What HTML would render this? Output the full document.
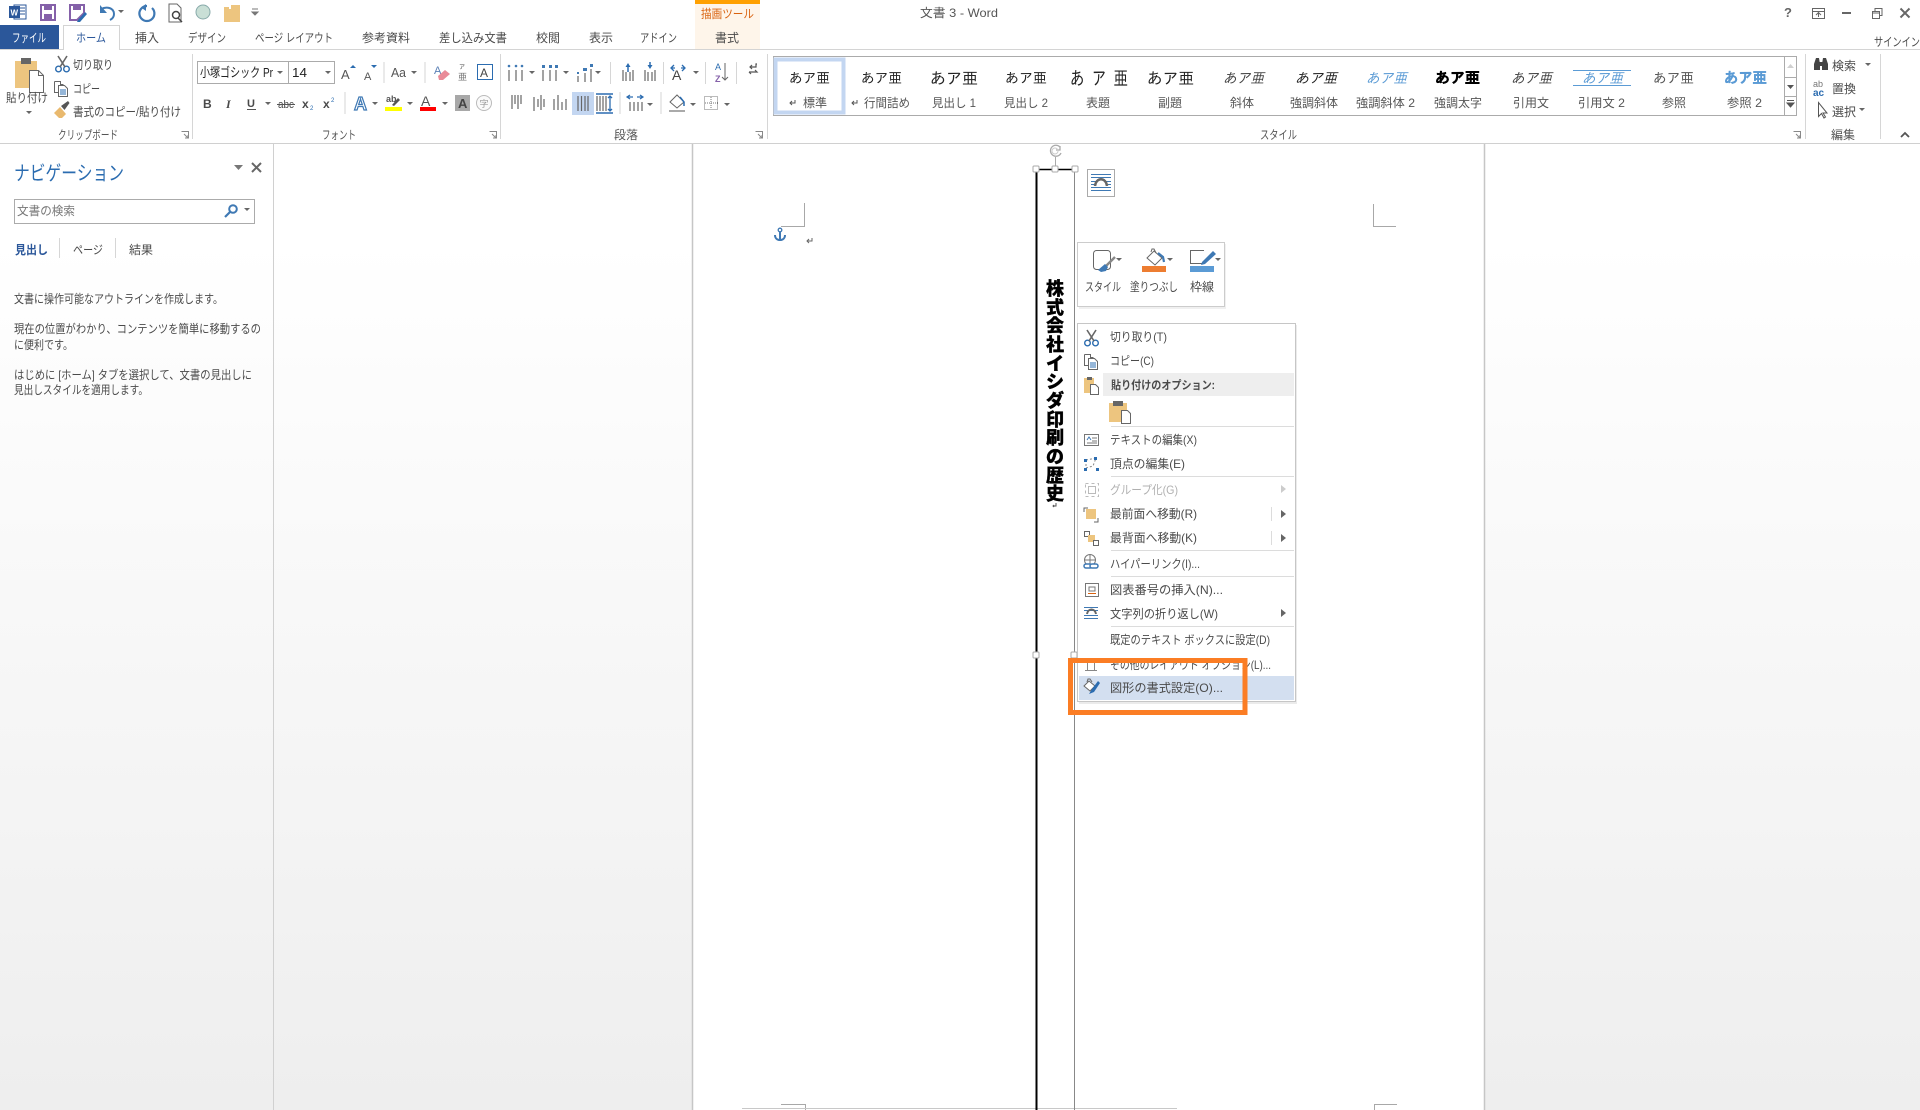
<!DOCTYPE html>
<html lang="ja"><head><meta charset="utf-8"><title>文書 3 - Word</title>
<style>
html,body{margin:0;padding:0;background:#fff;overflow:hidden}
svg{display:block}
text{font-family:"Liberation Sans","Noto Sans CJK JP",sans-serif;font-size:12px;fill:#4a4a4a}
.s{font-family:"IPAGothic","Noto Sans CJK JP",sans-serif;fill:#222}
.m{fill:#555}
.g{fill:#b0b0b0}
.l{stroke:#666;stroke-width:1.2;fill:none}
.sep{stroke:#d6d6d6;stroke-width:1;fill:none}
.b{fill:none;stroke:#2b6cb0;stroke-width:1.5}
.dr{fill:#666}
</style></head><body>
<svg xmlns="http://www.w3.org/2000/svg" width="1920" height="1110" viewBox="0 0 1920 1110">
<defs>
<linearGradient id="bg" x1="0" y1="144" x2="0" y2="1110" gradientUnits="userSpaceOnUse"><stop offset="0" stop-color="#fff"/><stop offset="0.1" stop-color="#fff"/><stop offset="1" stop-color="#eeeeee"/></linearGradient>
<g id="dd"><path class="dr" d="M0 0h6l-3 3z"/></g>
<g id="scis"><circle cx="3.5" cy="13" r="2.8" fill="none" stroke="#2b6cb0" stroke-width="1.4"/><circle cx="11.5" cy="13" r="2.8" fill="none" stroke="#2b6cb0" stroke-width="1.4"/><path d="M5 11L12 0M10 11L3 0" stroke="#666" stroke-width="1.6" fill="none"/></g>
<g id="copy"><path d="M.5.5h6v3h3M.5.5v11h4" fill="none" stroke="#666"/><path d="M4.5 4.5h6l3 3v8h-9z" fill="#fff" stroke="#666"/><path d="M6 9h6M6 11h6M6 13h6" stroke="#2b6cb0"/></g>
</defs>

<rect width="1920" height="1110" fill="#fff"/>
<!-- tool tab -->
<rect x="695" y="0" width="65" height="49" fill="#fef5ea"/>
<rect x="695" y="0" width="65" height="4" fill="#ffa000"/>

<!-- QAT -->
<g>
<rect x="14" y="5" width="12" height="14" fill="#fff" stroke="#2b579a"/><path d="M18 8h7M18 11h7M18 14h7" stroke="#2b579a"/><rect x="9" y="6" width="11" height="12" fill="#2b579a"/><text x="10.5" y="15.5" style="font-size:8px;fill:#fff;font-weight:700">W</text>
<path d="M41 5h14v15H41z" fill="#fff" stroke="#8561a9" stroke-width="2"/><rect x="44" y="5" width="8" height="5" fill="#8561a9"/><rect x="44" y="14" width="8" height="6" fill="#8561a9"/>
<path d="M70 5h14v8l-7 7h-7z" fill="#fff" stroke="#8561a9" stroke-width="2"/><rect x="73" y="5" width="8" height="5" fill="#8561a9"/><path d="M78 20l7-8 2 2-7 8-3 0z" fill="#2b6cb0"/>
<path d="M101 9c6-3 13-1 13 5 0 3-2 5-4 6" fill="none" stroke="#3f79b4" stroke-width="2"/><path d="M100 5v8h7z" fill="#3f79b4"/>
<use href="#dd" x="118" y="10"/>
<path d="M147 6a7.500 7.500 0 1 0 5 2" fill="none" stroke="#3f79b4" stroke-width="2.200"/><path d="M146 4v7l-5-3.500z" fill="#3f79b4"/>
<path d="M169 4h8l4 4v14h-12z" fill="#fff" stroke="#666"/><circle cx="176" cy="15" r="3.500" fill="none" stroke="#444" stroke-width="1.500"/><path d="M178 18l4 4" stroke="#444" stroke-width="1.500"/>
<circle cx="203" cy="12" r="7" fill="#c9dfd6" stroke="#8aa"/>
<rect x="224" y="9" width="16" height="13" fill="#edc57f"/><path d="M224 7h5v3h-5zM231 5h9v5h-9z" fill="#edc57f"/>
<path d="M252 9h6M252 12h6l-3 3z" stroke="#777" fill="#777"/>
</g>

<!-- Tabs -->
<rect x="0" y="25" width="59" height="25" fill="#2b579a"/>
<text x="12" y="42" textLength="34" lengthAdjust="spacingAndGlyphs" style="fill:#fff">ファイル</text>
<path d="M0 49.500H63.500V25.500H119.500V49.500H1920" fill="none" stroke="#d4d4d4"/>
<rect x="64" y="26" width="55" height="25" fill="#fff"/>
<text x="76" y="42" textLength="30" lengthAdjust="spacingAndGlyphs" style="fill:#2b579a">ホーム</text>
<text x="135" y="42" textLength="24" lengthAdjust="spacingAndGlyphs">挿入</text>
<text x="188" y="42" textLength="38" lengthAdjust="spacingAndGlyphs">デザイン</text>
<text x="255" y="42" textLength="78" lengthAdjust="spacingAndGlyphs">ページ レイアウト</text>
<text x="362" y="42" textLength="48" lengthAdjust="spacingAndGlyphs">参考資料</text>
<text x="439" y="42" textLength="68" lengthAdjust="spacingAndGlyphs">差し込み文書</text>
<text x="536" y="42" textLength="24" lengthAdjust="spacingAndGlyphs">校閲</text>
<text x="589" y="42" textLength="24" lengthAdjust="spacingAndGlyphs">表示</text>
<text x="640" y="42" textLength="37" lengthAdjust="spacingAndGlyphs">アドイン</text>
<text x="715" y="42" textLength="24" lengthAdjust="spacingAndGlyphs">書式</text>
<text x="701" y="18" textLength="53" lengthAdjust="spacingAndGlyphs" style="fill:#d9620f">描画ツール</text>
<text x="920" y="17" textLength="78" lengthAdjust="spacingAndGlyphs" style="fill:#555">文書 3 - Word</text>

<!-- Window controls -->
<text x="1784" y="17" style="font-size:13px;font-weight:700;fill:#666">?</text>
<path d="M1812.500 8.500h12v10h-12zM1812.500 11.500h12M1818.500 17v-4M1816 15l2.500-2.500 2.500 2.500" fill="none" stroke="#666"/>
<rect x="1842" y="12" width="9" height="2" fill="#666"/>
<path d="M1872.500 11.500h7v7h-7zM1872.500 13h7M1875 11V8.500h7v7h-2" fill="none" stroke="#666"/>
<path d="M1900.500 8.500l9 9M1909.500 8.500l-9 9" stroke="#666" stroke-width="2"/>
<text x="1874" y="46" textLength="46" lengthAdjust="spacingAndGlyphs">サインイン</text>

<!-- Ribbon separators -->
<path class="sep" d="M192.500 54v85M500.500 54v85M767.500 54v85M1805.500 54v85M1880.500 54v85"/>
<path d="M0 143.500H1920" stroke="#d0d0d0"/>

<!-- Clipboard -->
<g transform="translate(15,57)"><rect x="0" y="4" width="22" height="27" fill="#edc57f"/><rect x="6" y="1" width="10" height="6" fill="#666"/><path d="M14.500 13.500h9l5 5v17h-14z" fill="#fff" stroke="#666"/><path d="M23.500 13.500v5h5" fill="none" stroke="#666"/></g>
<text x="6" y="102" textLength="42" lengthAdjust="spacingAndGlyphs">貼り付け</text>
<use href="#dd" x="26" y="111"/>
<use href="#scis" x="55" y="56"/>
<text x="73" y="69" textLength="40" lengthAdjust="spacingAndGlyphs">切り取り</text>
<use href="#copy" x="54" y="81"/>
<text x="73" y="93" textLength="27" lengthAdjust="spacingAndGlyphs">コピー</text>
<path d="M54 113l6-6 6 7-4 4h-3z" fill="#e9b96e"/><path d="M61 106l7-5 1.500 2-5 7z" fill="#555"/>
<text x="73" y="116" textLength="108" lengthAdjust="spacingAndGlyphs">書式のコピー/貼り付け</text>
<text x="58" y="139" textLength="60" lengthAdjust="spacingAndGlyphs" class="m">クリップボード</text>
<path d="M181.500 131.500h7v7M184 134l4 4M188 135v3h-3" fill="none" stroke="#888"/>

<!-- Font -->
<rect x="197.500" y="61.500" width="137" height="22" fill="#fff" stroke="#ababab"/>
<path d="M288.500 61v23" stroke="#ababab"/>
<text x="200" y="77" textLength="73" lengthAdjust="spacingAndGlyphs" style="font-size:13px;fill:#222">小塚ゴシック Pr</text>
<use href="#dd" x="277" y="71"/>
<text x="292" y="77" textLength="15" lengthAdjust="spacingAndGlyphs" style="font-size:13px;fill:#222">14</text>
<use href="#dd" x="325" y="71"/>
<text x="341" y="79" style="font-size:13px;fill:#555">A</text><path d="M350 68h6l-3-3z" fill="#2b6cb0"/>
<text x="364" y="80" style="font-size:11px;fill:#555">A</text><path d="M371 65h6l-3 3z" fill="#2b6cb0"/>
<path class="sep" d="M384 62v21M425 62v21"/>
<text x="391" y="77" textLength="15" lengthAdjust="spacingAndGlyphs" style="font-size:13px;fill:#555">Aa</text>
<use href="#dd" x="411" y="71"/>
<text x="434" y="74" style="font-size:11px;fill:#5a7fb5">A</text><path d="M438 76l7-6 5 4-7 6h-4z" fill="#e98b98"/>
<text x="459" y="69" style="font-size:6px">ア</text><text x="458" y="80" style="font-size:9px;fill:#777">亜</text>
<rect x="477.500" y="64.500" width="15" height="15" fill="none" stroke="#2b6cb0"/><text x="480" y="77" style="font-size:12px;fill:#444">A</text>

<text x="203" y="108" style="font-weight:700;font-size:12px">B</text>
<text x="226" y="108" style="font-style:italic;font-size:12px;font-family:'Liberation Serif',serif;font-weight:700">I</text>
<text x="247" y="107" style="font-weight:700;font-size:11px">U</text><path d="M247 109.500h9" stroke="#555"/><use href="#dd" x="265" y="102"/>
<text x="278" y="108" textLength="16" lengthAdjust="spacingAndGlyphs" style="font-size:11px">abc</text><path d="M277 104.500h18" stroke="#555"/>
<text x="302" y="108" style="font-weight:700;font-size:12px">x</text><text x="310" y="110" style="font-size:6px;fill:#2b6cb0">2</text>
<text x="323" y="108" style="font-weight:700;font-size:12px">x</text><text x="331" y="102" style="font-size:6px;fill:#2b6cb0">2</text>
<path class="sep" d="M345 92v22"/>
<text x="354" y="110" style="font-size:18px;fill:#fff;stroke:#3f79b4;stroke-width:1.200;font-weight:700">A</text><use href="#dd" x="372" y="102"/>
<text x="386" y="102" style="font-size:9px;fill:#555;font-weight:700">ab</text><path d="M392 105l6-7 2 2-6 6z" fill="#555"/><rect x="385" y="107" width="17" height="4" fill="#ffff00"/><use href="#dd" x="407" y="102"/>
<text x="421" y="106" style="font-size:14px;fill:#555">A</text><rect x="420" y="107" width="16" height="4" fill="#ff0000"/><use href="#dd" x="442" y="102"/>
<rect x="455" y="95" width="15" height="16" fill="#a8a8a8"/><text x="458" y="108" style="font-size:13px;font-weight:700;fill:#444">A</text>
<circle cx="484" cy="103" r="7.500" fill="#fafafa" stroke="#bbb"/><text x="479.500" y="107" style="font-size:9px;fill:#999">字</text>
<text x="322" y="139" textLength="34" lengthAdjust="spacingAndGlyphs" class="m">フォント</text>
<path d="M489.500 131.500h7v7M492 134l4 4M496 135v3h-3" fill="none" stroke="#888"/>

<!-- Paragraph -->
<g fill="#3f79b4" stroke="none"><circle cx="509" cy="66" r="1.300"/><circle cx="516" cy="66" r="1.300"/><circle cx="522" cy="66" r="1.300"/><rect x="542" y="65" width="3" height="3"/><rect x="549" y="65" width="3" height="3"/><rect x="555" y="65" width="3" height="3"/><rect x="577" y="72" width="2" height="2"/><rect x="583" y="68" width="4" height="3"/><rect x="590" y="64" width="3" height="3"/></g>
<path class="l" d="M509 70v11M516 70v11M522 70v11M543 70v11M550 70v11M556 70v11M578 76v6M585 73v9M591 69v13"/>
<use href="#dd" x="529" y="71"/><use href="#dd" x="563" y="71"/><use href="#dd" x="595" y="71"/>
<path class="sep" d="M610.500 62v22M663.500 62v22M705.500 62v22M736.500 62v22"/>
<path class="l" d="M623 70v11M626 72v9M630 72v9M633 70v11M645 70v11M648 72v9M652 72v9M655 70v11"/>
<path d="M625.500 67l2.500-4 2.500 4zM647.500 65l2.500 4 2.500-4z" fill="#2b6cb0"/><path d="M628 67v5M650 65v-3" stroke="#2b6cb0" stroke-width="1.500"/>
<text x="672" y="80" style="font-size:14px;fill:#444">A</text><path d="M671 68h4M685 68h-4M674 65l-3 3 3 3M682 65l3 3-3 3" fill="none" stroke="#2b6cb0" stroke-width="1.300"/>
<use href="#dd" x="693" y="71"/>
<text x="715" y="70" style="font-size:9px;fill:#2b6cb0">A</text><text x="715" y="82" style="font-size:9px;fill:#8561a9;font-weight:700">Z</text><path d="M725 63v17M722 77l3 3 3-3" fill="none" stroke="#666"/>
<path d="M749 72h8l-2-2M749 72l2 2M757 64h-1v3h-6M752 65l-2 2 2 2" fill="none" stroke="#555" stroke-width="1.200"/>

<rect x="572" y="92" width="22" height="23" fill="#c3d6f1"/>
<path class="l" d="M512 95v14M515 95v9M518 95v14M521 95v9M534 97v14M538 99v8M541 95v15M544 99v8M554 99v11M558 95v15M562 102v8M566 99v11M578 96v15M581.500 96v15M585 96v15M588 96v15"/>
<path class="l" d="M597 96v15M600 96v15M603 96v15M606 96v15"/><path d="M596 94h17M596 113h17" stroke="#2b6cb0" stroke-width="1.400"/><path d="M610 96v15M608 98l2-2 2 2M608 109l2 2 2-2" fill="none" stroke="#2b6cb0" stroke-width="1.300"/>
<path class="sep" d="M620 92v22M661 92v22"/>
<path d="M627 97h6M630 95l-3 2 3 2M643 97h-6M640 95l3 2-3 2" fill="none" stroke="#2b6cb0" stroke-width="1.200"/>
<path class="l" d="M630 102v9M634 102v9M638 102v9M642 102v9"/>
<use href="#dd" x="647" y="103"/>
<path d="M670 102l7-7 7 7-7 6z" fill="#fff" stroke="#666"/><path d="M680 97l4 5v4" fill="none" stroke="#2b6cb0" stroke-width="1.500"/><rect x="669" y="110" width="16" height="2" fill="#aaa"/><use href="#dd" x="690" y="103"/>
<rect x="704.500" y="96.500" width="13" height="13" fill="none" stroke="#777" stroke-dasharray="1 1"/><path d="M711 97v13M705 103h13" stroke="#777" stroke-dasharray="1 1"/><use href="#dd" x="724" y="103"/>
<text x="614" y="139" textLength="24" lengthAdjust="spacingAndGlyphs" class="m">段落</text>
<path d="M755.500 131.500h7v7M758 134l4 4M762 135v3h-3" fill="none" stroke="#888"/>

<!-- Styles gallery -->
<rect x="773.500" y="56.500" width="1023" height="59" fill="#fff" stroke="#ababab"/>
<rect x="775.500" y="59.500" width="68" height="53" fill="none" stroke="#c3d6f1" stroke-width="4"/>
<path d="M1784.500 56v59M1784 77.500h13M1784 96.500h13" stroke="#ababab" fill="none"/>
<path d="M1787 68h7l-3.500-4z" fill="#d0d0d0"/><path d="M1787 85h7l-3.500 4z" fill="#555"/><path d="M1787 103h7l-3.500 4zM1787 100.500h7" fill="#555" stroke="#555"/>
<g>
<text class="s" x="789" y="83" textLength="41" lengthAdjust="spacingAndGlyphs" style="font-size:14px">あア亜</text>
<text class="s" x="861" y="83" textLength="41" lengthAdjust="spacingAndGlyphs" style="font-size:14px">あア亜</text>
<text class="s" x="930" y="84" textLength="48" lengthAdjust="spacingAndGlyphs" style="font-size:16px">あア亜</text>
<text class="s" x="1005" y="83" textLength="42" lengthAdjust="spacingAndGlyphs" style="font-size:14px">あア亜</text>
<text class="s" x="1070" y="85" textLength="58" lengthAdjust="spacingAndGlyphs" style="font-size:19px">あ ア 亜</text>
<text class="s" x="1147" y="84" textLength="47" lengthAdjust="spacingAndGlyphs" style="font-size:16px">あア亜</text>
<text class="s" x="1223" y="83" textLength="41" lengthAdjust="spacingAndGlyphs" style="font-size:14px;font-style:italic;fill:#444">あア亜</text>
<text class="s" x="1295" y="83" textLength="42" lengthAdjust="spacingAndGlyphs" style="font-size:14px;font-style:italic">あア亜</text>
<text class="s" x="1366" y="83" textLength="41" lengthAdjust="spacingAndGlyphs" style="font-size:14px;font-style:italic;fill:#5b9bd5">あア亜</text>
<text class="s" x="1435" y="83" textLength="45" lengthAdjust="spacingAndGlyphs" style="font-size:15px;font-weight:700;fill:#000;stroke:#000;stroke-width:.4">あア亜</text>
<text class="s" x="1511" y="83" textLength="41" lengthAdjust="spacingAndGlyphs" style="font-size:14px;font-style:italic;fill:#444">あア亜</text>
<text class="s" x="1582" y="83" textLength="41" lengthAdjust="spacingAndGlyphs" style="font-size:14px;font-style:italic;fill:#5b9bd5">あア亜</text>
<path d="M1573 70.500h58M1573 85.500h58" stroke="#5b9bd5"/>
<text class="s" x="1653" y="83" textLength="41" lengthAdjust="spacingAndGlyphs" style="font-size:14px;fill:#555">あア亜</text>
<text class="s" x="1724" y="83" textLength="43" lengthAdjust="spacingAndGlyphs" style="font-size:15px;font-weight:700;fill:#5b9bd5;stroke:#5b9bd5;stroke-width:.3">あア亜</text>
</g>
<path d="M795 100v3h-5M792 101l-2 2 2 2M857 100v3h-5M854 101l-2 2 2 2" fill="none" stroke="#555"/>
<text x="803" y="107" textLength="24" lengthAdjust="spacingAndGlyphs" class="m">標準</text>
<text x="864" y="107" textLength="46" lengthAdjust="spacingAndGlyphs" class="m">行間詰め</text>
<text x="932" y="107" textLength="44" lengthAdjust="spacingAndGlyphs" class="m">見出し 1</text>
<text x="1004" y="107" textLength="44" lengthAdjust="spacingAndGlyphs" class="m">見出し 2</text>
<text x="1086" y="107" textLength="24" lengthAdjust="spacingAndGlyphs" class="m">表題</text>
<text x="1158" y="107" textLength="24" lengthAdjust="spacingAndGlyphs" class="m">副題</text>
<text x="1230" y="107" textLength="24" lengthAdjust="spacingAndGlyphs" class="m">斜体</text>
<text x="1290" y="107" textLength="48" lengthAdjust="spacingAndGlyphs" class="m">強調斜体</text>
<text x="1356" y="107" textLength="59" lengthAdjust="spacingAndGlyphs" class="m">強調斜体 2</text>
<text x="1434" y="107" textLength="48" lengthAdjust="spacingAndGlyphs" class="m">強調太字</text>
<text x="1513" y="107" textLength="36" lengthAdjust="spacingAndGlyphs" class="m">引用文</text>
<text x="1578" y="107" textLength="47" lengthAdjust="spacingAndGlyphs" class="m">引用文 2</text>
<text x="1662" y="107" textLength="24" lengthAdjust="spacingAndGlyphs" class="m">参照</text>
<text x="1727" y="107" textLength="35" lengthAdjust="spacingAndGlyphs" class="m">参照 2</text>
<text x="1260" y="139" textLength="37" lengthAdjust="spacingAndGlyphs" class="m">スタイル</text>
<path d="M1793.500 131.500h7v7M1796 134l4 4M1800 135v3h-3" fill="none" stroke="#888"/>

<!-- Editing -->
<path d="M1814 70v-6l2-6h3l1 6v6zM1822 70v-6l1-6h3l2 6v6z" fill="#444"/><rect x="1819" y="62" width="4" height="4" fill="#444"/>
<text x="1832" y="70" textLength="24" lengthAdjust="spacingAndGlyphs">検索</text><use href="#dd" x="1865" y="63"/>
<text x="1813" y="87" style="font-size:9px;fill:#777">ab</text><text x="1813" y="96" style="font-size:10px;fill:#2b6cb0;font-weight:700">ac</text>
<text x="1832" y="93" textLength="24" lengthAdjust="spacingAndGlyphs">置換</text>
<path d="M1818.500 102.500v14l3-3 2.500 4.500 1.500-1-2.500-4h4z" fill="#fff" stroke="#555"/>
<text x="1832" y="116" textLength="24" lengthAdjust="spacingAndGlyphs">選択</text><use href="#dd" x="1859" y="108"/>
<text x="1831" y="139" textLength="24" lengthAdjust="spacingAndGlyphs" class="m">編集</text>
<path d="M1901 137l4-4 4 4" fill="none" stroke="#555" stroke-width="1.800"/>

<!-- Main background -->
<rect x="0" y="144" width="1920" height="966" fill="url(#bg)"/>
<path d="M273.500 144V1110" stroke="#d0d0d0"/>

<!-- Nav pane -->
<text x="14" y="180" textLength="110" lengthAdjust="spacingAndGlyphs" style="font-size:20px;fill:#2b6cb0">ナビゲーション</text>
<path d="M234 165h9l-4.500 5z" fill="#777"/>
<path d="M252 163l9 9M261 163l-9 9" stroke="#666" stroke-width="2"/>
<rect x="14.500" y="199.500" width="240" height="24" fill="#fff" stroke="#ababab"/>
<text x="17" y="215" textLength="58" lengthAdjust="spacingAndGlyphs" style="fill:#777">文書の検索</text>
<circle cx="233" cy="209" r="3.800" fill="none" stroke="#3f79b4" stroke-width="2"/><path d="M230 212l-5 5" stroke="#3f79b4" stroke-width="2.200"/>
<path d="M244 208h6l-3 3z" fill="#666"/>
<text x="15" y="254" textLength="33" lengthAdjust="spacingAndGlyphs" style="fill:#2b579a;font-weight:700">見出し</text>
<path class="sep" d="M59.500 238v20M115.500 238v20"/>
<text x="73" y="254" textLength="30" lengthAdjust="spacingAndGlyphs">ページ</text>
<text x="129" y="254" textLength="24" lengthAdjust="spacingAndGlyphs">結果</text>
<text x="14" y="303" textLength="209" lengthAdjust="spacingAndGlyphs">文書に操作可能なアウトラインを作成します。</text>
<text x="14" y="333" textLength="247" lengthAdjust="spacingAndGlyphs">現在の位置がわかり、コンテンツを簡単に移動するの</text>
<text x="14" y="349" textLength="59" lengthAdjust="spacingAndGlyphs">に便利です。</text>
<text x="14" y="379" textLength="238" lengthAdjust="spacingAndGlyphs">はじめに [ホーム] タブを選択して、文書の見出しに</text>
<text x="14" y="394" textLength="134" lengthAdjust="spacingAndGlyphs">見出しスタイルを適用します。</text>

<!-- Page -->
<rect x="692" y="144" width="793" height="966" fill="#fff"/>
<path d="M692.500 144V1110M1484.500 144V1110" stroke="#c6c6c6" stroke-width="1.500"/>
<path d="M781 226.500h23.500V203M1396 226.500h-22.500V204M781 1104.500h24.500V1110M1397 1104.500h-22.500V1110" fill="none" stroke="#a8a8a8"/>
<path d="M742 1108.500H1177" stroke="#c8c8c8"/>
<!-- Anchor -->
<circle cx="780" cy="230" r="1.800" fill="none" stroke="#3f79b4" stroke-width="1.300"/>
<path d="M780 232v8M775 235c0 3 2 5 5 5s5-2 5-5" fill="none" stroke="#3f79b4" stroke-width="2"/>
<path d="M812 238v3h-5M809 239l-2 2 2 2" fill="none" stroke="#666"/>

<!-- Text box -->
<path d="M1036.500 169V1110" stroke="#000" stroke-width="2"/>
<path d="M1036 169.500H1075" stroke="#000" stroke-width="1.500"/>
<path d="M1074.500 169V1110" stroke="#888"/>
<path d="M1055.500 157v10" stroke="#aaa"/>
<path d="M1060 147a5.500 5.500 0 1 0 1 6M1060 146v4h-4" fill="none" stroke="#aaa" stroke-width="1.300"/>
<circle cx="1055" cy="151" r="3" fill="none" stroke="#ccc"/>
<g fill="#fff" stroke="#aaa"><rect x="1033" y="166" width="6" height="6" rx="1"/><rect x="1052" y="166" width="6" height="6" rx="1"/><rect x="1072" y="166" width="6" height="6" rx="1"/><rect x="1033" y="652" width="6" height="6" rx="1"/><rect x="1071" y="652" width="6" height="6" rx="1"/></g>
<text x="1055 1055 1055 1055 1055 1055 1055 1055 1055 1055 1055 1055" y="295 314 332 351 370 388 407 426 444 463 482 500" text-anchor="middle" style="font-size:18px;font-weight:900;fill:#000;stroke:#000;stroke-width:.3">株式会社イシダ印刷の歴史</text>
<path d="M1056 503v3h-3M1054 505l-1 1 1 1" fill="none" stroke="#555"/>

<!-- Layout option -->
<rect x="1087.500" y="169.500" width="27" height="27" fill="#fff" stroke="#aaa"/>
<path d="M1091 174.500h20M1091 177.500h20M1091 187.500h20M1091 190.500h20" stroke="#3f79b4"/><path d="M1091 181.500h6M1105 181.500h6M1091 184.500h3M1108 184.500h3" stroke="#3f79b4"/>
<path d="M1095 186c1-9 11-9 12 0" fill="none" stroke="#666" stroke-width="2.500"/>

<!-- Mini toolbar -->
<rect x="1079" y="244" width="147" height="65" fill="#000" opacity=".06"/>
<rect x="1077.500" y="242.500" width="147" height="64" fill="#fff" stroke="#ccc"/>
<rect x="1093.500" y="250.500" width="17" height="19" rx="3" fill="#fff" stroke="#666"/>
<path d="M1115 257l-9 9" stroke="#888" stroke-width="2.500"/><path d="M1105 264l-7 6 3 2 5-1 2-4z" fill="#3f79b4"/><use href="#dd" x="1116" y="258"/>
<path d="M1147 258l7-7 8 7-7 7z" fill="#fff" stroke="#666"/><path d="M1151 252l1-3h2l2 4" fill="none" stroke="#666"/><path d="M1158 253l5 4 1 5" fill="none" stroke="#3f79b4" stroke-width="2.200"/><rect x="1142" y="266" width="24" height="6" fill="#ed7d31"/><use href="#dd" x="1167" y="258"/>
<path d="M1204 250.500h-13.500v13h13" fill="none" stroke="#666"/><path d="M1202 262l11-11 3 3-11 10-4 1z" fill="#3f79b4"/><rect x="1190" y="266" width="24" height="6" fill="#5b9bd5"/><use href="#dd" x="1215" y="258"/>
<text x="1085" y="291" textLength="36" lengthAdjust="spacingAndGlyphs">スタイル</text>
<text x="1130" y="291" textLength="48" lengthAdjust="spacingAndGlyphs">塗りつぶし</text>
<text x="1190" y="291" textLength="24" lengthAdjust="spacingAndGlyphs">枠線</text>

<!-- Context menu -->
<rect x="1079" y="325" width="218" height="379" fill="#000" opacity=".08"/>
<rect x="1077.500" y="323.500" width="218" height="378" fill="#fff" stroke="#c6c6c6"/>
<rect x="1103" y="373" width="191" height="23" fill="#eee"/>
<rect x="1079" y="676" width="215" height="24" fill="#d3dff0"/>
<path d="M1111 426.500h183M1111 476.500h183M1111 550.500h183M1111 576.500h183M1111 626.500h183" stroke="#dcdcdc"/>
<path d="M1271.500 507v14M1271.500 531v14" stroke="#dcdcdc"/>
<path d="M1281 485l5 4-5 4z" fill="#ccc"/><path d="M1281 510l5 4-5 4zM1281 534l5 4-5 4zM1281 609l5 4-5 4z" fill="#666"/>

<use href="#scis" x="1084" y="330"/>
<use href="#copy" x="1084" y="354"/>
<g transform="translate(1084,377)"><rect x="0" y="1" width="10" height="15" fill="#edc57f"/><rect x="3" y="0" width="5" height="3" fill="#666"/><path d="M6.500 7.500h5l3 3v7h-8z" fill="#fff" stroke="#666"/></g>
<g transform="translate(1109,401)"><rect x="0" y="2" width="18" height="19" fill="#edc57f"/><rect x="4" y="0" width="10" height="5" fill="#666"/><path d="M12.500 9.500h6l3 3v10h-9z" fill="#fff" stroke="#666"/></g>
<rect x="1084.500" y="434.500" width="14" height="11" fill="#fff" stroke="#777"/><path d="M1087 440l2-3 2 3" fill="none" stroke="#3f79b4"/><path d="M1092 438h5M1092 441h5M1087 443h10" stroke="#777"/>
<path d="M1086 460l10-2-3 8-7 2z" fill="none" stroke="#888" stroke-dasharray="2 2"/><g fill="#2b6cb0"><rect x="1084" y="459" width="3" height="3"/><rect x="1094" y="457" width="3" height="3"/><rect x="1084" y="468" width="3" height="3"/><rect x="1096" y="468" width="3" height="3"/></g>
<g fill="none" stroke="#bbb"><rect x="1085.500" y="483.500" width="13" height="13" stroke-dasharray="3 3"/><rect x="1088.500" y="486.500" width="7" height="7"/></g>
<path d="M1084 512v-4h4M1098 518v4h-4" fill="none" stroke="#666"/><rect x="1086" y="509" width="10" height="10" fill="#edc57f"/>
<rect x="1084.500" y="531.500" width="5" height="5" fill="#fff" stroke="#666"/><rect x="1088" y="535" width="7" height="7" fill="#edc57f"/><rect x="1093.500" y="540.500" width="5" height="5" fill="#fff" stroke="#666"/>
<circle cx="1090" cy="560" r="5.500" fill="none" stroke="#777"/><path d="M1084.500 560h11M1090 554.500v11" stroke="#777"/><rect x="1084" y="564" width="8" height="4" rx="2" fill="#fff" stroke="#3f79b4" stroke-width="1.500"/><rect x="1090" y="564" width="8" height="4" rx="2" fill="#fff" stroke="#3f79b4" stroke-width="1.500"/>
<rect x="1085.500" y="583.500" width="13" height="13" fill="none" stroke="#777"/><rect x="1089" y="587" width="6" height="4" fill="none" stroke="#777"/><path d="M1088 593.500h8" stroke="#d9620f"/>
<path d="M1084 607.500h14M1084 610.500h14M1084 618.500h14M1084 615.500h14" stroke="#3f79b4"/><path d="M1087 614c1-6 8-6 9 0" fill="none" stroke="#666" stroke-width="2"/>
<path d="M1084 686l5-5 6 5-5 5z" fill="#fff" stroke="#666"/><path d="M1087 682l1-3h2l2 3" fill="none" stroke="#666"/><path d="M1098 681l-6 8-3 5 5-2 6-9z" fill="#2b6cb0"/>

<text x="1110" y="341" textLength="57" lengthAdjust="spacingAndGlyphs">切り取り(T)</text>
<text x="1110" y="365" textLength="44" lengthAdjust="spacingAndGlyphs">コピー(C)</text>
<text x="1111" y="389" textLength="104" lengthAdjust="spacingAndGlyphs" style="font-weight:700;font-size:11.500px">貼り付けのオプション:</text>
<text x="1110" y="444" textLength="87" lengthAdjust="spacingAndGlyphs">テキストの編集(X)</text>
<text x="1110" y="468" textLength="75" lengthAdjust="spacingAndGlyphs">頂点の編集(E)</text>
<text x="1110" y="494" textLength="68" lengthAdjust="spacingAndGlyphs" class="g">グループ化(G)</text>
<text x="1110" y="518" textLength="87" lengthAdjust="spacingAndGlyphs">最前面へ移動(R)</text>
<text x="1110" y="542" textLength="87" lengthAdjust="spacingAndGlyphs">最背面へ移動(K)</text>
<text x="1110" y="568" textLength="90" lengthAdjust="spacingAndGlyphs">ハイパーリンク(I)...</text>
<text x="1110" y="594" textLength="113" lengthAdjust="spacingAndGlyphs">図表番号の挿入(N)...</text>
<text x="1110" y="618" textLength="108" lengthAdjust="spacingAndGlyphs">文字列の折り返し(W)</text>
<text x="1110" y="644" textLength="160" lengthAdjust="spacingAndGlyphs">既定のテキスト ボックスに設定(D)</text>
<text x="1110" y="669" textLength="161" lengthAdjust="spacingAndGlyphs">その他のレイアウト オプション(L)...</text>
<text x="1110" y="692" textLength="113" lengthAdjust="spacingAndGlyphs">図形の書式設定(O)...</text>
<g fill="#888"><rect x="1085" y="662" width="12" height="1"/><rect x="1085" y="670" width="12" height="1"/><rect x="1087" y="663" width="1" height="7"/><rect x="1094" y="663" width="1" height="7"/></g>

<!-- Highlight rectangle -->
<rect x="1070.500" y="660.500" width="174.500" height="52" fill="none" stroke="#fb7d24" stroke-width="5"/>
</svg>
</body></html>
